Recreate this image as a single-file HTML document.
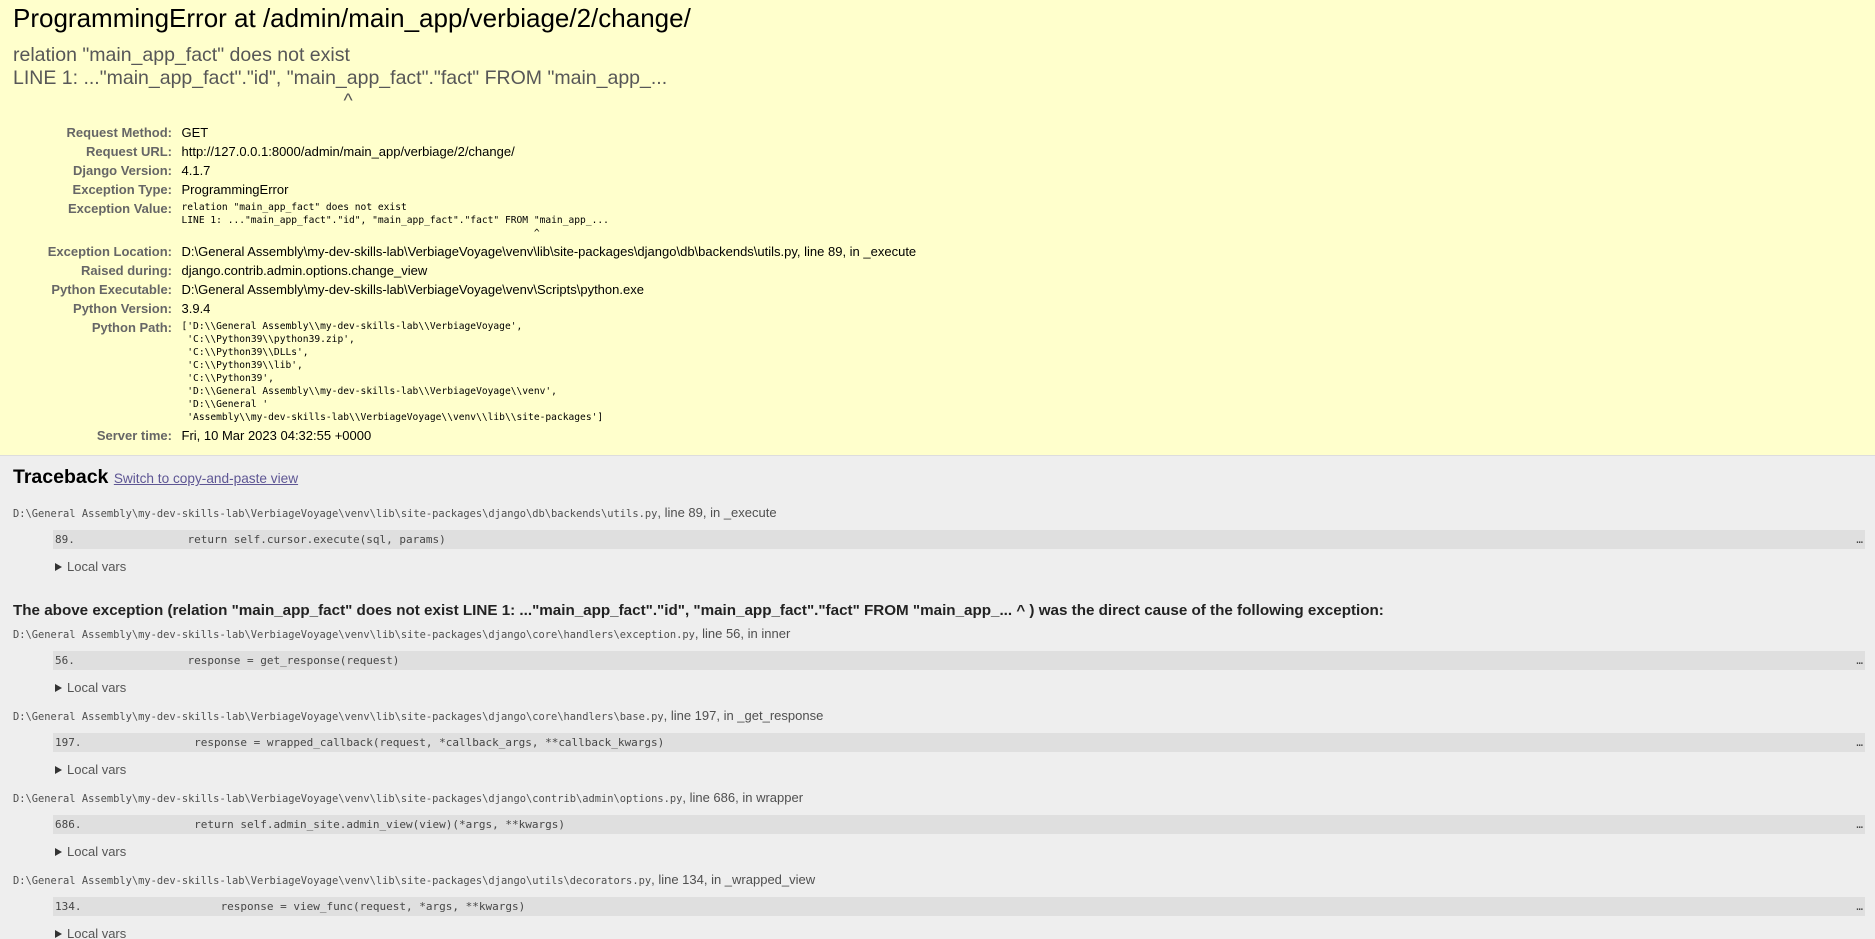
<!DOCTYPE html>
<html><head><meta charset="utf-8">
<style>
html *{padding:0;margin:0;}
html{overflow:hidden;width:1875px;height:939px;background:#eee;}
body{width:1875px;height:939px;overflow:hidden;font-size:13px;font-family:"Liberation Sans",Arial,sans-serif;background:#eee;color:#000;}
body *{padding:10px 13px;}
body * *{padding:0;}
body>div{border-bottom:1px solid #ddd;}
h1{font-weight:normal;font-size:26px;}
h2{margin-bottom:.8em;font-size:19.5px;}
h3{margin:1em 0 .5em 0;font-size:15.2px;}
code,pre{font-size:100%;white-space:pre-wrap;}
.mono{font-family:"DejaVu Sans Mono","Liberation Mono",monospace;font-size:10.2px;}
.tv{font-size:9.6px;line-height:13px;}
.fn{font-size:10.4px;}
table{border-collapse:collapse;width:100%;}
tbody td,tbody th{vertical-align:top;padding:2px 3px;}
tbody th{width:12em;text-align:right;color:#666;padding-right:.5em;}
#summary{background:#ffc;padding-top:3px;}
#summary table{border:none;background:transparent;}
pre.exception_value{font-family:"Liberation Sans",Arial,sans-serif;color:#575757;font-size:1.5em;margin:10px 0;}
#traceback{background:#eee;padding-right:0;}
h2 span.commands{font-size:.7em;font-weight:normal;}
h2 span.commands a{color:#5E5694;}
ul.traceback{list-style-type:none;color:#222;}
ul.traceback li.frame{padding-bottom:1em;color:#4f4f4f;}
div.context{padding:10px 0;overflow:hidden;}
div.context ol{padding-left:30px;margin:0 10px;list-style:none;}
div.context ol li{white-space:pre;color:#464646;background:#dfdfdf;padding:3px 2px;position:relative;font-size:11px;}
div.context ol li span{position:absolute;right:2px;}
summary{margin-left:40px;color:#555;list-style:none;cursor:pointer;}
summary:before{content:"";display:inline-block;border-left:7px solid #333;border-top:4px solid transparent;border-bottom:4px solid transparent;margin-right:5px;margin-left:2px;}
</style></head><body>
<div id="summary">
<h1>ProgrammingError at /admin/main_app/verbiage/2/change/</h1>
<pre class="exception_value">relation "main_app_fact" does not exist
LINE 1: ..."main_app_fact"."id", "main_app_fact"."fact" FROM "main_app_...
                                                             ^</pre>
<table class="meta"><tbody>
<tr><th>Request Method:</th><td>GET</td></tr>
<tr><th>Request URL:</th><td>http://127.0.0.1:8000/admin/main_app/verbiage/2/change/</td></tr>
<tr><th>Django Version:</th><td>4.1.7</td></tr>
<tr><th>Exception Type:</th><td>ProgrammingError</td></tr>
<tr><th>Exception Value:</th><td><pre class="mono tv">relation "main_app_fact" does not exist
LINE 1: ..."main_app_fact"."id", "main_app_fact"."fact" FROM "main_app_...
                                                             ^</pre></td></tr>
<tr><th>Exception Location:</th><td>D:\General Assembly\my-dev-skills-lab\VerbiageVoyage\venv\lib\site-packages\django\db\backends\utils.py, line 89, in _execute</td></tr>
<tr><th>Raised during:</th><td>django.contrib.admin.options.change_view</td></tr>
<tr><th>Python Executable:</th><td>D:\General Assembly\my-dev-skills-lab\VerbiageVoyage\venv\Scripts\python.exe</td></tr>
<tr><th>Python Version:</th><td>3.9.4</td></tr>
<tr><th>Python Path:</th><td><pre class="mono tv">['D:\\General Assembly\\my-dev-skills-lab\\VerbiageVoyage',
 'C:\\Python39\\python39.zip',
 'C:\\Python39\\DLLs',
 'C:\\Python39\\lib',
 'C:\\Python39',
 'D:\\General Assembly\\my-dev-skills-lab\\VerbiageVoyage\\venv',
 'D:\\General '
 'Assembly\\my-dev-skills-lab\\VerbiageVoyage\\venv\\lib\\site-packages']</pre></td></tr>
<tr><th>Server time:</th><td>Fri, 10 Mar 2023 04:32:55 +0000</td></tr>
</tbody></table>
</div>
<div id="traceback">
<h2>Traceback <span class="commands"><a href="#">Switch to copy-and-paste view</a></span></h2>
<div>
<ul class="traceback">
<li class="frame"><code class="mono fn">D:\General Assembly\my-dev-skills-lab\VerbiageVoyage\venv\lib\site-packages\django\db\backends\utils.py</code>, line 89, in _execute
<div class="context"><ol><li class="mono">89.                 return self.cursor.execute(sql, params)<span>…</span></li></ol></div>
<details><summary>Local vars</summary></details></li>
<li><h3>The above exception (relation "main_app_fact" does not exist LINE 1: ..."main_app_fact"."id", "main_app_fact"."fact" FROM "main_app_... ^ ) was the direct cause of the following exception:</h3></li>
<li class="frame"><code class="mono fn">D:\General Assembly\my-dev-skills-lab\VerbiageVoyage\venv\lib\site-packages\django\core\handlers\exception.py</code>, line 56, in inner
<div class="context"><ol><li class="mono">56.                 response = get_response(request)<span>…</span></li></ol></div>
<details><summary>Local vars</summary></details></li>
<li class="frame"><code class="mono fn">D:\General Assembly\my-dev-skills-lab\VerbiageVoyage\venv\lib\site-packages\django\core\handlers\base.py</code>, line 197, in _get_response
<div class="context"><ol><li class="mono">197.                 response = wrapped_callback(request, *callback_args, **callback_kwargs)<span>…</span></li></ol></div>
<details><summary>Local vars</summary></details></li>
<li class="frame"><code class="mono fn">D:\General Assembly\my-dev-skills-lab\VerbiageVoyage\venv\lib\site-packages\django\contrib\admin\options.py</code>, line 686, in wrapper
<div class="context"><ol><li class="mono">686.                 return self.admin_site.admin_view(view)(*args, **kwargs)<span>…</span></li></ol></div>
<details><summary>Local vars</summary></details></li>
<li class="frame"><code class="mono fn">D:\General Assembly\my-dev-skills-lab\VerbiageVoyage\venv\lib\site-packages\django\utils\decorators.py</code>, line 134, in _wrapped_view
<div class="context"><ol><li class="mono">134.                     response = view_func(request, *args, **kwargs)<span>…</span></li></ol></div>
<details><summary>Local vars</summary></details></li>
<li class="frame"><code class="mono fn">D:\General Assembly\my-dev-skills-lab\VerbiageVoyage\venv\lib\site-packages\django\views\decorators\cache.py</code>, line 62, in _wrapped_view_func
<div class="context"><ol><li class="mono">62.                 response = view_func(request, *args, **kwargs)<span>…</span></li></ol></div>
<details><summary>Local vars</summary></details></li>
</ul>
</div>
</div>
</body></html>
